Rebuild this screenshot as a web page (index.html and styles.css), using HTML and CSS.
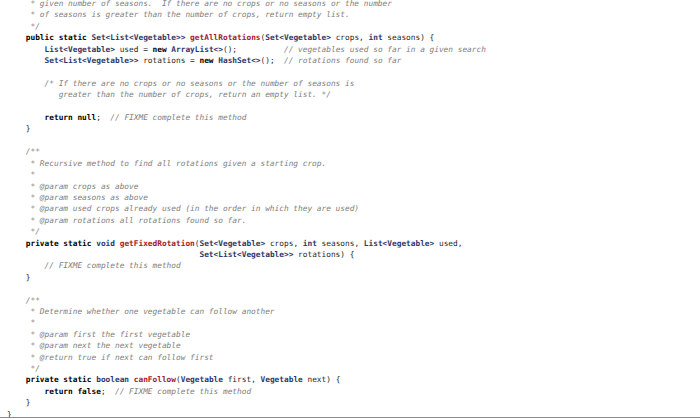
FILE: index.html
```html
<!DOCTYPE html>
<html>
<head>
<meta charset="utf-8">
<link rel="stylesheet" href="styles.css">
</head>
<body>
<div class="editor">
<pre class="code"><span class="c">     * given number of seasons.  If there are no crops or no seasons or the number</span>
<span class="c">     * of seasons is greater than the number of crops, return empty list.</span>
<span class="c">     */</span>
    <span class="k">public static</span> <span class="t">Set&lt;List&lt;Vegetable&gt;&gt;</span> <span class="m">getAllRotations</span>(<span class="t">Set&lt;Vegetable&gt;</span> crops, <span class="t">int</span> seasons) {
        <span class="t">List&lt;Vegetable&gt;</span> used = <span class="k">new</span> <span class="t">ArrayList&lt;&gt;</span>();          <span class="c">// vegetables used so far in a given search</span>
        <span class="t">Set&lt;List&lt;Vegetable&gt;&gt;</span> rotations = <span class="k">new</span> <span class="t">HashSet&lt;&gt;</span>();  <span class="c">// rotations found so far</span>

        <span class="c">/* If there are no crops or no seasons or the number of seasons is</span>
<span class="c">           greater than the number of crops, return an empty list. */</span>

        <span class="k">return null</span>;  <span class="c">// FIXME complete this method</span>
    }

<span class="c">    /**</span>
<span class="c">     * Recursive method to find all rotations given a starting crop.</span>
<span class="c">     *</span>
<span class="c">     * @param crops as above</span>
<span class="c">     * @param seasons as above</span>
<span class="c">     * @param used crops already used (in the order in which they are used)</span>
<span class="c">     * @param rotations all rotations found so far.</span>
<span class="c">     */</span>
    <span class="k">private static</span> <span class="t">void</span> <span class="m">getFixedRotation</span>(<span class="t">Set&lt;Vegetable&gt;</span> crops, <span class="t">int</span> seasons, <span class="t">List&lt;Vegetable&gt;</span> used,
                                         <span class="t">Set&lt;List&lt;Vegetable&gt;&gt;</span> rotations) {
        <span class="c">// FIXME complete this method</span>
    }

<span class="c">    /**</span>
<span class="c">     * Determine whether one vegetable can follow another</span>
<span class="c">     *</span>
<span class="c">     * @param first the first vegetable</span>
<span class="c">     * @param next the next vegetable</span>
<span class="c">     * @return true if next can follow first</span>
<span class="c">     */</span>
    <span class="k">private static</span> <span class="t">boolean</span> <span class="m">canFollow</span>(<span class="t">Vegetable</span> first, <span class="t">Vegetable</span> next) {
        <span class="k">return false</span>;  <span class="c">// FIXME complete this method</span>
    }
}
</pre>
</div>
</body>
</html>
```

FILE: styles.css
```css
html, body {
  margin: 0;
  padding: 0;
  background: #ffffff;
}

.editor {
  width: 700px;
  height: 417px;
  overflow: hidden;
  border-bottom: 1px solid #8a8a8a;
  box-shadow: 0 1px 0 #c4c4c4;
  background: #ffffff;
}

.code {
  margin: -2px 0 0 0;
  padding: 0 0 0 7px;
  font-family: "DejaVu Sans Mono", "Liberation Mono", monospace;
  font-size: 7.8px;
  line-height: 11.4px;
  color: #1f1f1f;
  white-space: pre;
}

.k {
  font-weight: bold;
  color: #000000;
}

.t {
  font-weight: bold;
  color: #2c3868;
}

.m {
  font-weight: bold;
  color: #a01a2a;
}

.c {
  font-style: italic;
  color: #7e7e7e;
}
```
